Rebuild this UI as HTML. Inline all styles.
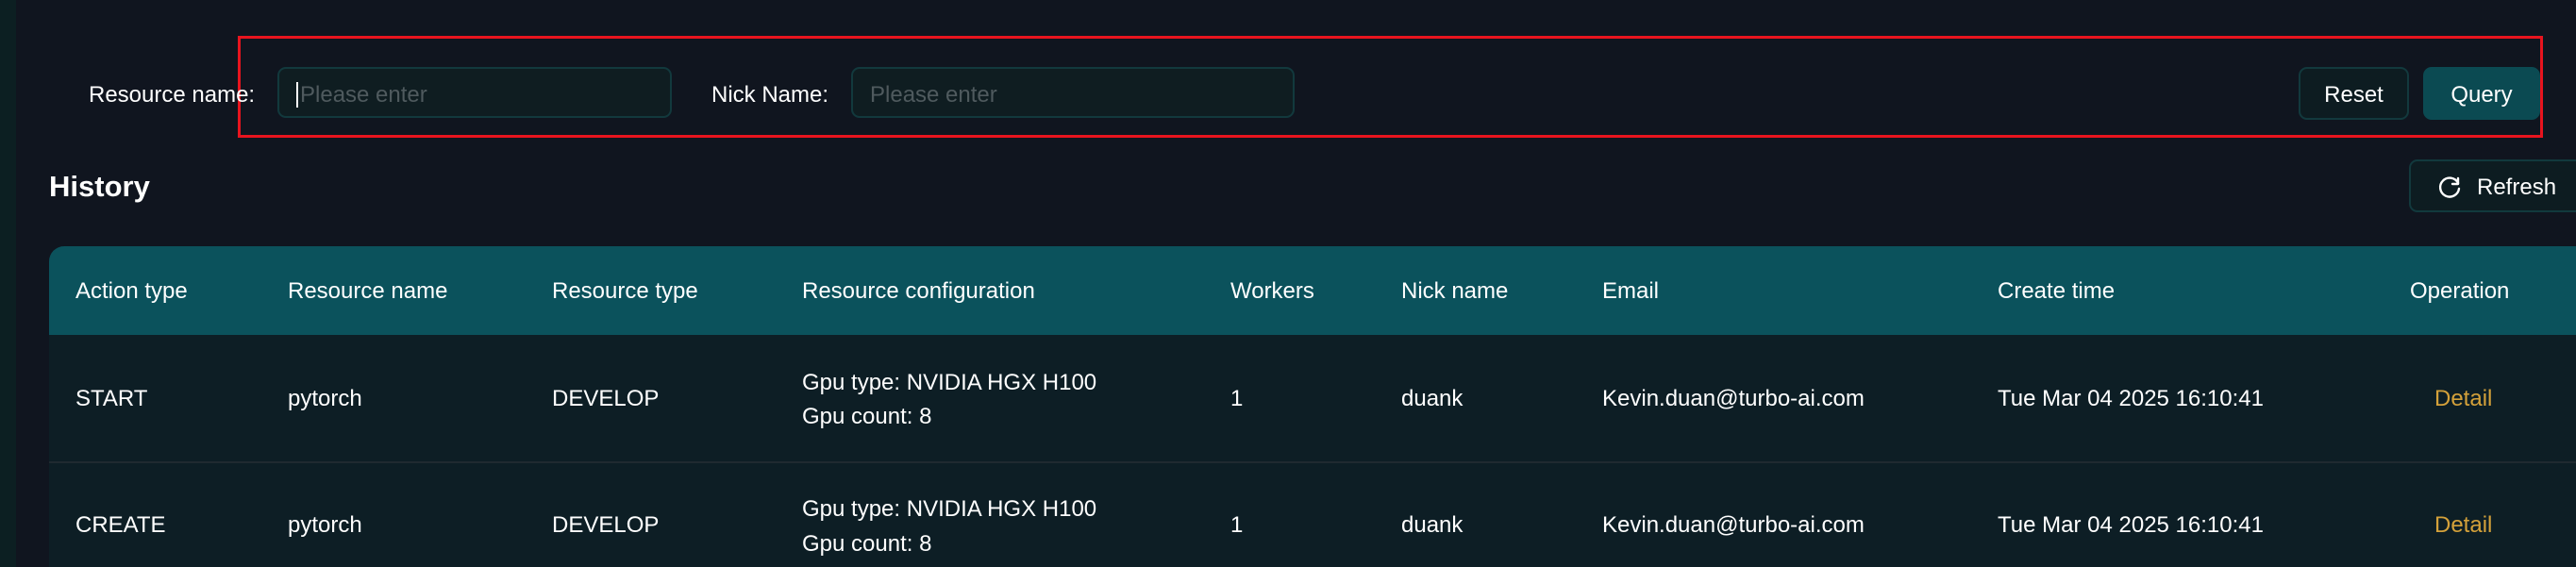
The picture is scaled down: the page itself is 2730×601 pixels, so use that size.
<!DOCTYPE html>
<html><head><meta charset="utf-8"><style>
*{box-sizing:border-box;margin:0;padding:0}
body{width:2730px;height:601px;background:#10151f;font-family:"Liberation Sans",sans-serif;color:#fff;position:relative;overflow:hidden}
.abs{position:absolute}
.side{left:0;top:0;width:17px;height:601px;background:#0c1f22}
.red{left:252px;top:38px;width:2443px;height:108px;border:3px solid #e8141e}
.lbl{font-size:24px;line-height:30px}
.inp{height:54px;border:2px solid #12393d;border-radius:9px;background:#0f1d21;font-size:24px;color:#4f5a5e;padding:14px 18px;line-height:28px}
.btn{height:56px;border-radius:9px;font-size:24px;display:flex;align-items:center;justify-content:center;padding-top:3px}
.hdr{left:52px;top:261px;width:2700px;height:94px;background:#0b525c;border-radius:16px 16px 0 0}
.row{left:52px;width:2700px;background:#0d1e25}
.t{position:absolute;font-size:24px;line-height:30px;white-space:nowrap}
</style></head><body>
<div class="abs side"></div>
<div class="abs red"></div>
<div class="abs lbl" style="left:94px;top:86px">Resource name:</div>
<div class="abs inp" style="left:294px;top:71px;width:418px"><span style="border-left:2px solid #fff;padding-left:2px">Please enter</span></div>
<div class="abs lbl" style="left:754px;top:86px">Nick Name:</div>
<div class="abs inp" style="left:902px;top:71px;width:470px">Please enter</div>
<div class="abs btn" style="left:2436px;top:71px;width:117px;border:2px solid #12393d;background:#0d1c21">Reset</div>
<div class="abs btn" style="left:2568px;top:71px;width:124px;background:#0b4a52">Query</div>
<div class="abs" style="left:52px;top:180px;font-size:31px;font-weight:bold">History</div>
<div class="abs btn" style="left:2553px;top:169px;width:200px;border:2px solid #12393d;background:#0d1c21;justify-content:flex-start;padding-left:28px">
<svg width="26" height="26" viewBox="0 0 26 26" style="margin-right:16px"><path d="M22 8 A10 10 0 1 0 23 14" fill="none" stroke="#fff" stroke-width="2.4" stroke-linecap="round"/><path d="M22 3 L22 9 L16 9" fill="none" stroke="#fff" stroke-width="2.4" stroke-linecap="round" stroke-linejoin="round"/></svg>Refresh</div>
<div class="abs hdr"></div>
<div class="abs row" style="top:355px;height:134px"></div>
<div class="abs" style="left:52px;top:489px;width:2700px;height:2px;background:#1f2a30"></div>
<div class="abs row" style="top:491px;height:110px"></div>
<div class="t" style="left:80px;top:294px">Action type</div>
<div class="t" style="left:305px;top:294px">Resource name</div>
<div class="t" style="left:585px;top:294px">Resource type</div>
<div class="t" style="left:850px;top:294px">Resource configuration</div>
<div class="t" style="left:1304px;top:294px">Workers</div>
<div class="t" style="left:1485px;top:294px">Nick name</div>
<div class="t" style="left:1698px;top:294px">Email</div>
<div class="t" style="left:2117px;top:294px">Create time</div>
<div class="t" style="left:2554px;top:294px">Operation</div>

<div class="t" style="left:80px;top:408px">START</div>
<div class="t" style="left:305px;top:408px">pytorch</div>
<div class="t" style="left:585px;top:408px">DEVELOP</div>
<div class="t" style="left:850px;top:391px">Gpu type: NVIDIA HGX H100</div>
<div class="t" style="left:850px;top:427px">Gpu count: 8</div>
<div class="t" style="left:1304px;top:408px">1</div>
<div class="t" style="left:1485px;top:408px">duank</div>
<div class="t" style="left:1698px;top:408px">Kevin.duan@turbo-ai.com</div>
<div class="t" style="left:2117px;top:408px">Tue Mar 04 2025 16:10:41</div>
<div class="t" style="left:2580px;top:408px;color:#d4a13a">Detail</div>

<div class="t" style="left:80px;top:542px">CREATE</div>
<div class="t" style="left:305px;top:542px">pytorch</div>
<div class="t" style="left:585px;top:542px">DEVELOP</div>
<div class="t" style="left:850px;top:525px">Gpu type: NVIDIA HGX H100</div>
<div class="t" style="left:850px;top:562px">Gpu count: 8</div>
<div class="t" style="left:1304px;top:542px">1</div>
<div class="t" style="left:1485px;top:542px">duank</div>
<div class="t" style="left:1698px;top:542px">Kevin.duan@turbo-ai.com</div>
<div class="t" style="left:2117px;top:542px">Tue Mar 04 2025 16:10:41</div>
<div class="t" style="left:2580px;top:542px;color:#d4a13a">Detail</div>
</body></html>
